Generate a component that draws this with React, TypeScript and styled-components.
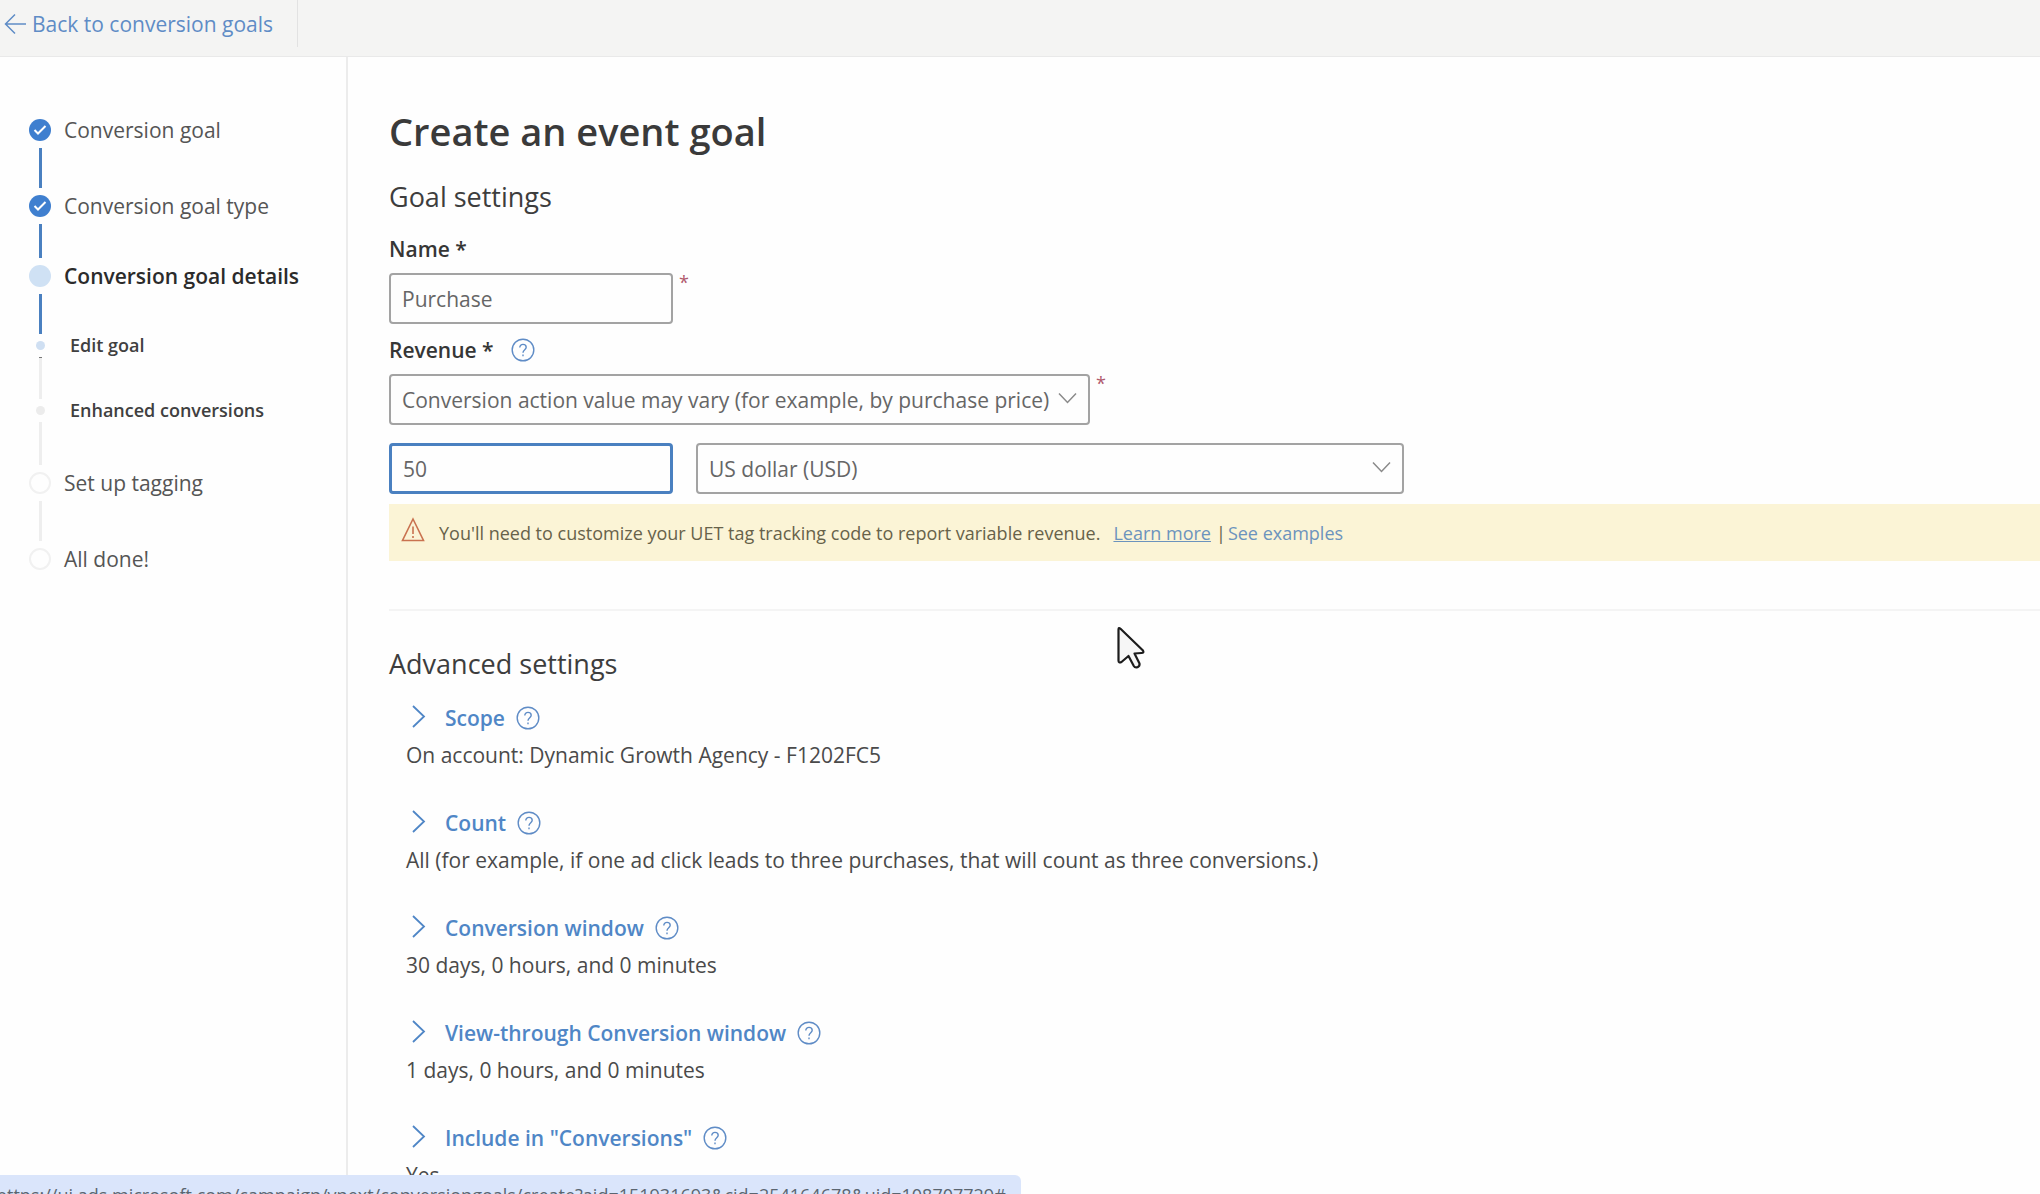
import React, { useState } from "react";
import styled, { createGlobalStyle, css } from "styled-components";

const GlobalStyle = createGlobalStyle`
  *, *::before, *::after { box-sizing: border-box; }
  html, body { margin: 0; padding: 0; }
  body {
    background: #fefefe;
    color: #4a4a4a;
    font-family: "Segoe UI", "Open Sans", "Noto Sans", sans-serif;
    font-size: 21px;
    line-height: 28px;
    overflow: hidden;
  }
  button, input, select { font: inherit; color: inherit; margin: 0; }
  h1, h2, p, ol { margin: 0; padding: 0; }
`;

const Page = styled.div`
  display: flex;
  flex-direction: column;
  height: 100vh;
  overflow: hidden;
`;

const TopBar = styled.header`
  display: flex;
  flex: none;
  height: 57px;
  background: #f4f4f3;
  border-bottom: 1px solid #e9e9e9;
`;

const BackLink = styled.a`
  display: flex;
  align-items: center;
  gap: 5px;
  width: 298px;
  height: 47px;
  padding-left: 4px;
  border-right: 1px solid #e2e2e2;
  color: #5f8cc6;
  text-decoration: none;
`;

const Columns = styled.div`
  display: flex;
  flex: 1;
  min-height: 0;
`;

const Sidebar = styled.nav`
  flex: none;
  width: 348px;
  padding: 62px 0 0 29px;
  border-right: 2px solid #ececec;
`;

const StepList = styled.ol`
  list-style: none;
`;

type StepKind = "done" | "current" | "open" | "subCurrent" | "subOpen";

const isSub = (kind: StepKind) => kind === "subCurrent" || kind === "subOpen";

const Step = styled.li<{ $height: number }>`
  display: flex;
  height: ${(p) => p.$height}px;
`;

const Rail = styled.div`
  display: flex;
  flex-direction: column;
  align-items: center;
  width: 22px;
`;

const markerLook = {
  done: css`background: #3f7fcf;`,
  current: css`background: #cfe1f4;`,
  open: css`border: 2px solid #f1f1f1;`,
  subCurrent: css`background: #cfdff2;`,
  subOpen: css`background: #ececec;`,
};

const Marker = styled.span<{ $kind: StepKind }>`
  display: flex;
  flex: none;
  align-items: center;
  justify-content: center;
  width: ${(p) => (isSub(p.$kind) ? 9 : 22)}px;
  height: ${(p) => (isSub(p.$kind) ? 9 : 22)}px;
  border-radius: 50%;
  ${(p) => markerLook[p.$kind]}
`;

const Connector = styled.span<{ $active: boolean; $capped: boolean }>`
  flex: 1;
  width: 3px;
  margin: 7px 0;
  background: ${(p) => (p.$active ? "#4a80c0" : "#eeeeee")};
  border-top: ${(p) => (p.$capped ? "1px solid #777777" : "none")};
`;

const StepLabel = styled.a<{ $kind: StepKind }>`
  height: ${(p) => (isSub(p.$kind) ? 9 : 22)}px;
  margin-left: ${(p) => (isSub(p.$kind) ? 19 : 13)}px;
  line-height: ${(p) => (isSub(p.$kind) ? 9 : 22)}px;
  font-size: ${(p) => (isSub(p.$kind) ? 18 : 21)}px;
  font-weight: ${(p) => (isSub(p.$kind) || p.$kind === "current" ? 600 : 400)};
  color: ${(p) => (p.$kind === "current" ? "#2b2b2b" : isSub(p.$kind) ? "#404040" : "#555555")};
  text-decoration: none;
  white-space: nowrap;
`;

const Main = styled.main`
  flex: 1;
  min-width: 0;
  padding: 51px 0 0 41px;
  overflow: hidden;
`;

const Title = styled.h1`
  font-size: 38px;
  font-weight: 600;
  line-height: 46px;
  color: #3a3a3a;
`;

const SectionTitle = styled.h2`
  font-size: 27px;
  font-weight: 400;
  line-height: 36px;
  color: #3d3d3d;
`;

const GoalSettings = styled.section`
  padding: 25px 0 48px;
  border-bottom: 2px solid #f4f4f4;
`;

const FieldLabel = styled.div`
  display: flex;
  align-items: center;
  gap: 17px;
  height: 28px;
  margin: 12px 0 10px;
  color: #363636;
  font-weight: 600;
`;

const FieldRow = styled.div`
  display: flex;
  gap: 6px;
`;

const NameField = styled.div`
  padding-top: 8px;
`;

const controlLook = css`
  width: 100%;
  height: 51px;
  padding: 0 11px;
  background: transparent;
  border: 2px solid #a3a3a3;
  border-radius: 4px;
  outline: none;
  color: #666666;
`;

const TextInput = styled.input`
  ${controlLook}
  max-width: 284px;

  &:focus {
    border: 3px solid #4a80c0;
  }
`;

const SelectBox = styled.div<{ $width: number }>`
  position: relative;
  width: 100%;
  max-width: ${(p) => p.$width}px;
  height: 51px;

  svg {
    position: absolute;
    top: 18px;
    right: 13px;
    pointer-events: none;
  }
`;

const Select = styled.select`
  ${controlLook}
  appearance: none;
`;

const RequiredMark = styled.span`
  color: #b0596c;
  font-size: 18px;
  line-height: 18px;
`;

const ValueRow = styled.div`
  display: flex;
  gap: 23px;
  padding: 18px 0 10px;
`;

const HelpButton = styled.button`
  display: flex;
  padding: 0;
  background: none;
  border: 0;
  color: #5f8cc6;
`;

const Notice = styled.div`
  display: flex;
  align-items: center;
  height: 57px;
  padding-left: 12px;
  background: #fbf4d6;
  color: #67624a;
  font-size: 18px;

  svg {
    margin: 0 14px 7px 0;
  }
`;

const NoticeLink = styled.a<{ $underlined?: boolean }>`
  color: #6c93bd;
  text-decoration: ${(p) => (p.$underlined ? "underline" : "none")};
`;

const NoticeLinks = styled.span`
  margin-left: 13px;
`;

const Divider = styled.span`
  margin: 0 2px 0 5px;
`;

const AdvancedSettings = styled.section`
  padding-top: 35px;
`;

const SettingList = styled.div`
  display: flex;
  flex-direction: column;
  gap: 40px;
  padding: 22px 0 0 17px;
`;

const SettingHead = styled.div`
  display: flex;
  align-items: center;
  gap: 11px;
  height: 28px;
`;

const Expander = styled.button`
  display: flex;
  align-items: center;
  gap: 19px;
  padding: 0 0 0 6px;
  background: none;
  border: 0;
  color: #4f86c6;
  font-weight: 600;

  svg {
    margin-bottom: 2px;
  }
`;

const SettingValue = styled.p`
  margin-top: 9px;
`;

const StatusBar = styled.div`
  position: fixed;
  bottom: 0;
  left: 0;
  height: 19px;
  padding: 6px 15px 0 0;
  overflow: hidden;
  background: #dae5fb;
  border-radius: 0 6px 0 0;
  color: #5b6570;
  font-size: 18px;
  white-space: nowrap;

  span {
    display: block;
    margin-left: -4px;
  }
`;

const Pointer = styled.svg`
  position: fixed;
  top: 625px;
  left: 1115px;
  pointer-events: none;
`;

const BackArrow = () => (
  <svg width="23" height="22" viewBox="0 0 23 22" fill="none" stroke="currentColor" strokeWidth="1.5">
    <path d="M22 11H1.5M11 1.5L1.5 11L11 20.5" />
  </svg>
);

const CheckIcon = () => (
  <svg width="14" height="12" viewBox="0 0 14 12" fill="none" stroke="#ffffff" strokeWidth="2">
    <path d="M1.5 6L5 9.5L12.5 2" />
  </svg>
);

const ChevronDown = () => (
  <svg width="19" height="12" viewBox="0 0 19 12" fill="none" stroke="#8a8a8a" strokeWidth="1.5">
    <path d="M1 1.5L9.5 10.5L18 1.5" />
  </svg>
);

const ChevronRight = () => (
  <svg width="14" height="24" viewBox="0 0 14 24" fill="none" stroke="currentColor" strokeWidth="1.8">
    <path d="M1 1L12 11.5L1 22" />
  </svg>
);

const WarningIcon = () => (
  <svg width="24" height="25" viewBox="0 0 24 25" fill="none" stroke="#c9724f" strokeWidth="1.6">
    <path d="M12 2L22.5 23.5H1.5Z" />
    <path d="M12 9.5V17M12 19V21" />
  </svg>
);

const HelpIcon = () => (
  <svg width="24" height="24" viewBox="0 0 24 24" fill="none" stroke="currentColor" strokeWidth="1.4">
    <circle cx="12" cy="12" r="10.8" />
    <path d="M8.8 9.6C8.8 7.6 10.2 6.4 12 6.4C13.9 6.4 15.2 7.6 15.2 9.3C15.2 11.6 12 11.9 12 14.8" />
    <path d="M12 16.6V18.2" />
  </svg>
);

const Help = ({ topic }: { topic: string }) => (
  <HelpButton type="button" aria-label={`Help: ${topic}`}>
    <HelpIcon />
  </HelpButton>
);

const steps: { label: string; kind: StepKind; height: number }[] = [
  { label: "Conversion goal", kind: "done", height: 76 },
  { label: "Conversion goal type", kind: "done", height: 70 },
  { label: "Conversion goal details", kind: "current", height: 76 },
  { label: "Edit goal", kind: "subCurrent", height: 65 },
  { label: "Enhanced conversions", kind: "subOpen", height: 66 },
  { label: "Set up tagging", kind: "open", height: 76 },
  { label: "All done!", kind: "open", height: 22 },
];

const settings = [
  { name: "Scope", value: "On account: Dynamic Growth Agency - F1202FC5" },
  {
    name: "Count",
    value: "All (for example, if one ad click leads to three purchases, that will count as three conversions.)",
  },
  { name: "Conversion window", value: "30 days, 0 hours, and 0 minutes" },
  { name: "View-through Conversion window", value: "1 days, 0 hours, and 0 minutes" },
  { name: 'Include in "Conversions"', value: "Yes" },
];

export default function App() {
  const [name, setName] = useState("Purchase");
  const [amount, setAmount] = useState("50");

  return (
    <>
      <GlobalStyle />
      <Page>
        <TopBar>
          <BackLink href="#">
            <BackArrow />
            Back to conversion goals
          </BackLink>
        </TopBar>
        <Columns>
          <Sidebar>
            <StepList>
              {steps.map((step, i) => (
                <Step key={step.label} $height={step.height}>
                  <Rail>
                    <Marker $kind={step.kind}>{step.kind === "done" && <CheckIcon />}</Marker>
                    {i < steps.length - 1 && (
                      <Connector
                        $active={step.kind === "done" || step.kind === "current"}
                        $capped={step.kind === "subCurrent"}
                      />
                    )}
                  </Rail>
                  <StepLabel href="#" $kind={step.kind}>
                    {step.label}
                  </StepLabel>
                </Step>
              ))}
            </StepList>
          </Sidebar>
          <Main>
            <Title>Create an event goal</Title>
            <GoalSettings>
              <SectionTitle>Goal settings</SectionTitle>
              <NameField>
                <FieldLabel>
                  <label htmlFor="goal-name">Name *</label>
                </FieldLabel>
                <FieldRow>
                  <TextInput id="goal-name" value={name} onChange={(e) => setName(e.target.value)} />
                  <RequiredMark>*</RequiredMark>
                </FieldRow>
              </NameField>
              <FieldLabel>
                <label htmlFor="goal-revenue">Revenue *</label>
                <Help topic="Revenue" />
              </FieldLabel>
              <FieldRow>
                <SelectBox $width={701}>
                  <Select id="goal-revenue">
                    <option>Conversion action value may vary (for example, by purchase price)</option>
                  </Select>
                  <ChevronDown />
                </SelectBox>
                <RequiredMark>*</RequiredMark>
              </FieldRow>
              <ValueRow>
                <TextInput
                  aria-label="Default value"
                  autoFocus
                  value={amount}
                  onChange={(e) => setAmount(e.target.value)}
                />
                <SelectBox $width={708}>
                  <Select aria-label="Currency">
                    <option>US dollar (USD)</option>
                  </Select>
                  <ChevronDown />
                </SelectBox>
              </ValueRow>
              <Notice>
                <WarningIcon />
                You'll need to customize your UET tag tracking code to report variable revenue.
                <NoticeLinks>
                  <NoticeLink href="#" $underlined>
                    Learn more
                  </NoticeLink>
                  <Divider>|</Divider>
                  <NoticeLink href="#">See examples</NoticeLink>
                </NoticeLinks>
              </Notice>
            </GoalSettings>
            <AdvancedSettings>
              <SectionTitle>Advanced settings</SectionTitle>
              <SettingList>
                {settings.map((setting) => (
                  <div key={setting.name}>
                    <SettingHead>
                      <Expander type="button" aria-expanded={false}>
                        <ChevronRight />
                        {setting.name}
                      </Expander>
                      <Help topic={setting.name} />
                    </SettingHead>
                    <SettingValue>{setting.value}</SettingValue>
                  </div>
                ))}
              </SettingList>
            </AdvancedSettings>
          </Main>
        </Columns>
      </Page>
      <StatusBar>
        <span>
          https://ui.ads.microsoft.com/campaign/vnext/conversiongoals/create?aid=151931693&amp;cid=254164678&amp;uid=108707729#
        </span>
      </StatusBar>
      <Pointer width="32" height="46" viewBox="0 0 32 46" fill="#f6f6f6" stroke="#1c1c1c" strokeWidth="2.2" strokeLinejoin="round">
        <path d="M3.5 4.5Q3.5 2 5.5 3.8L28 25.5Q29.3 28 26.5 28L19.5 28.5L24.5 38.5Q25 41 22.5 42.2Q20 43 18.8 41L13.5 31L6.5 37Q3.5 38.5 3.5 35.5Z" />
      </Pointer>
    </>
  );
}
